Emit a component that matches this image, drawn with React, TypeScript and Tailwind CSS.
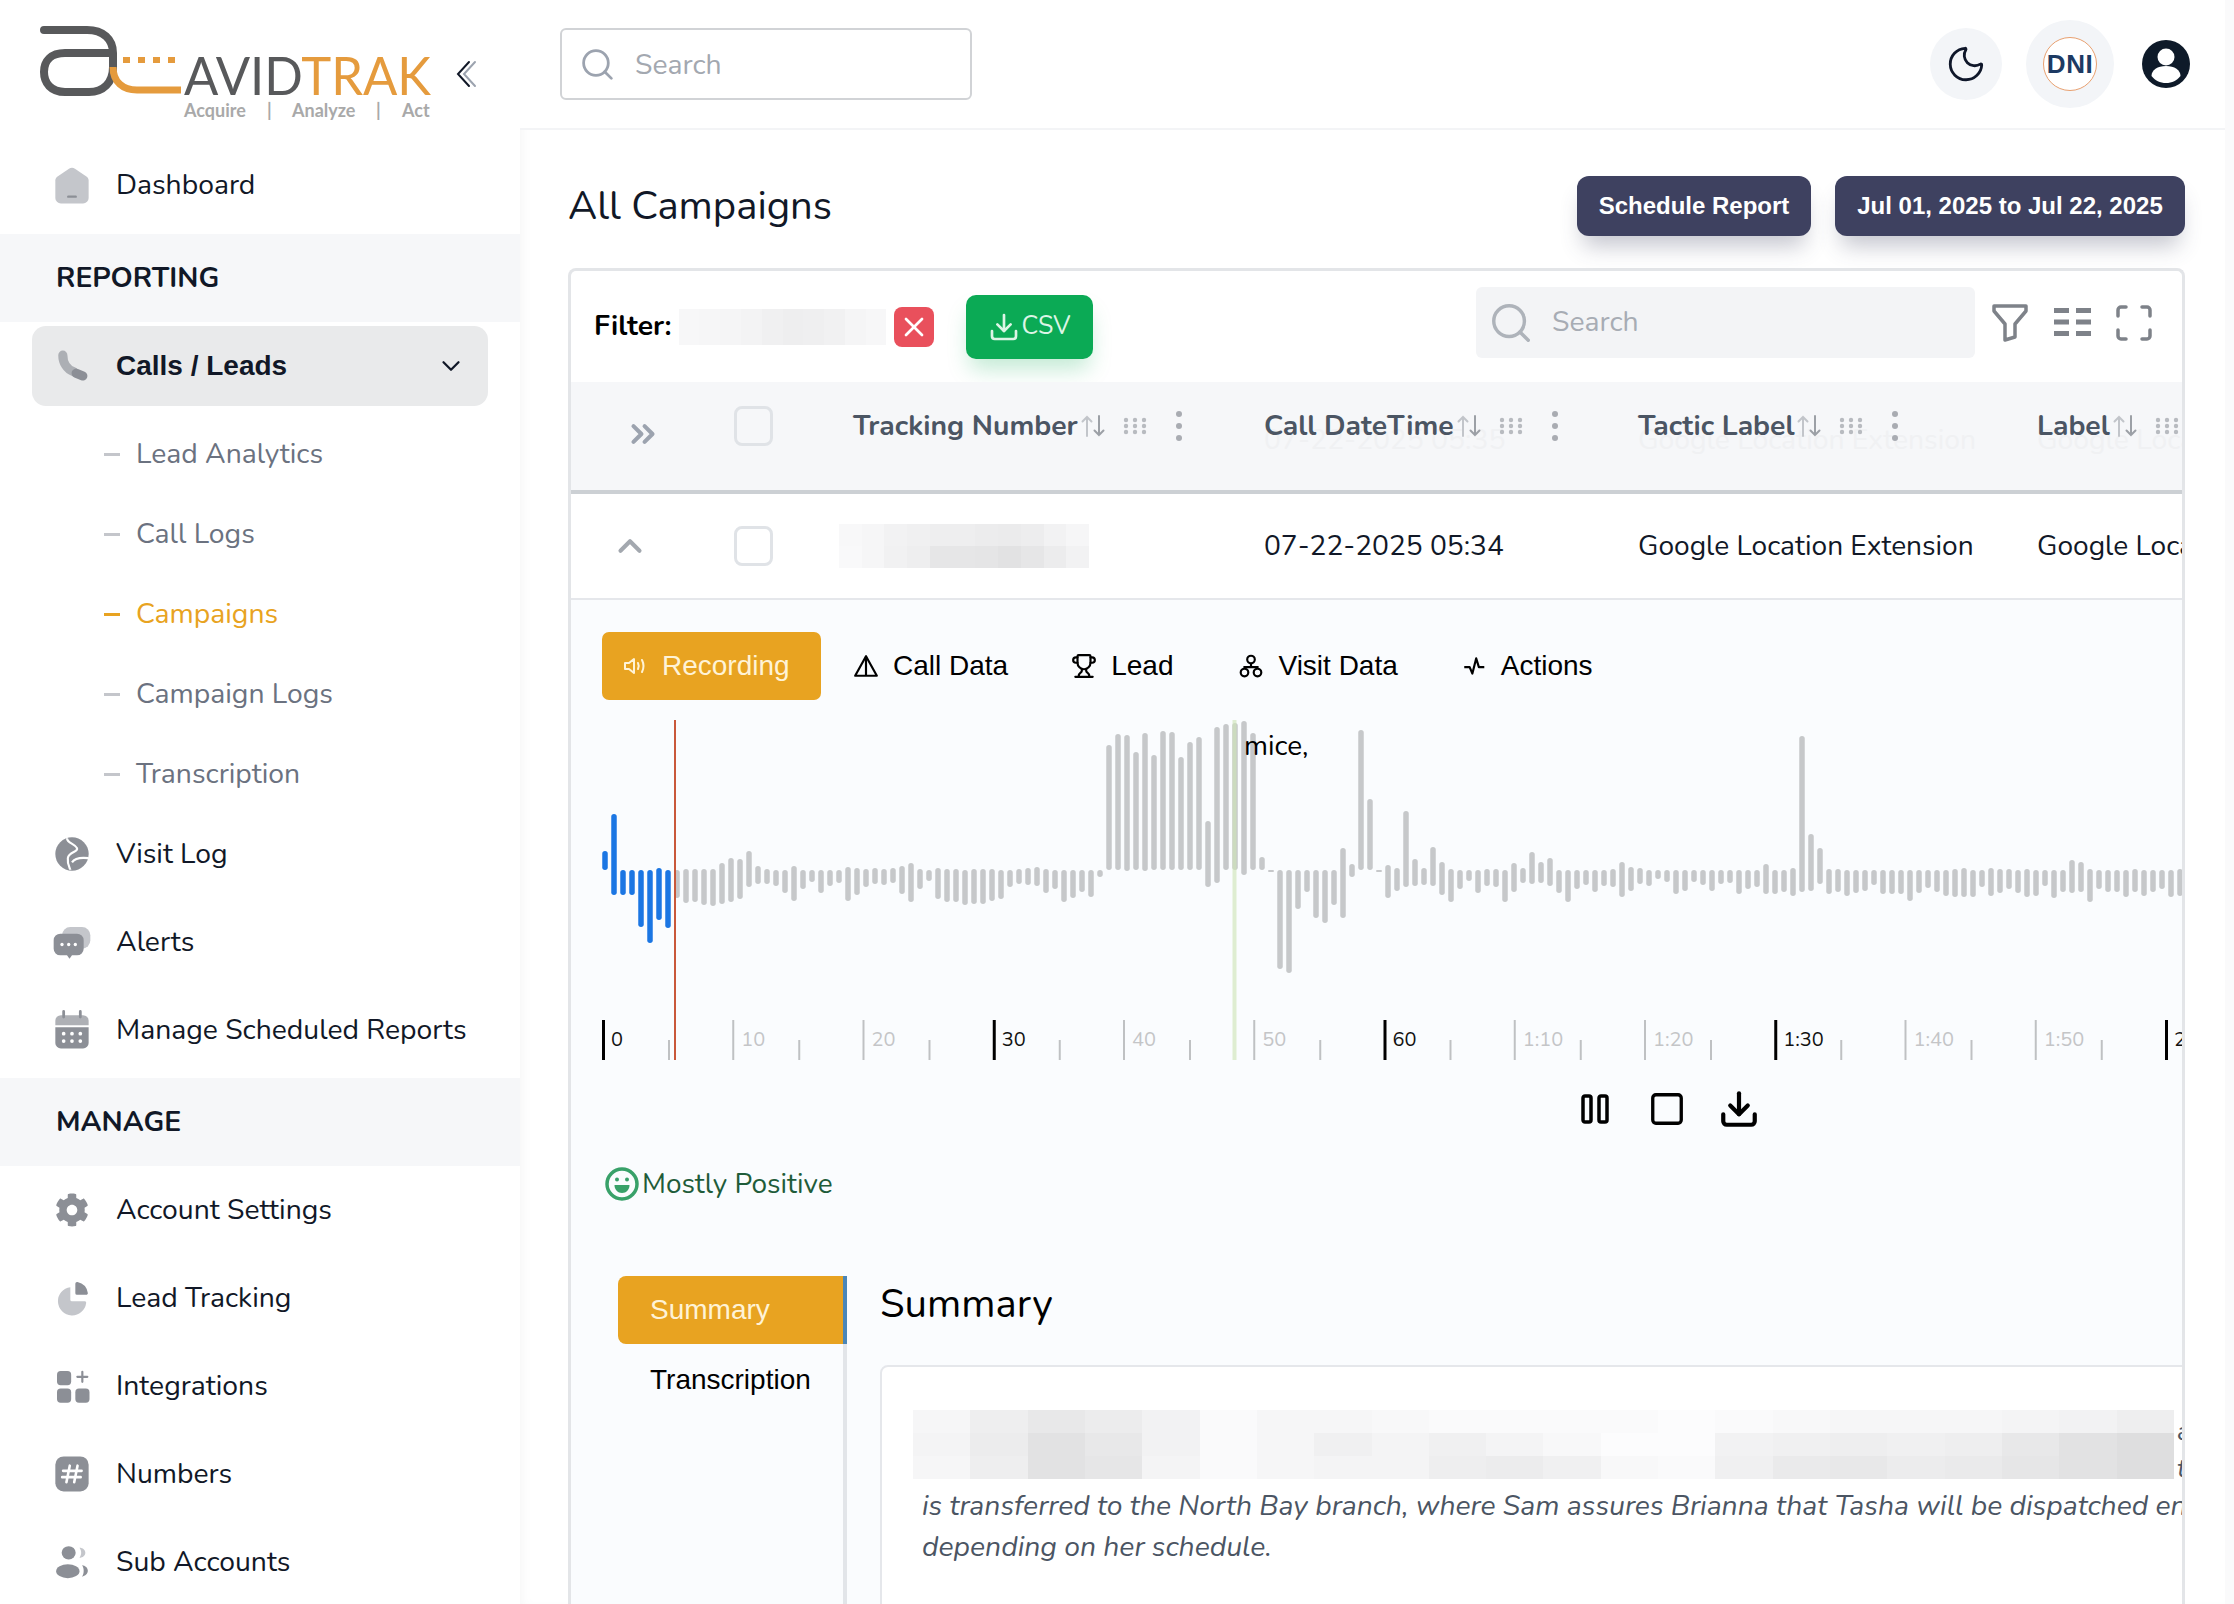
// App.tsx - AvidTrak campaign call detail

import type { ReactNode } from "react";
import { ChevronDown, ChevronUp, ChevronsRight, Download, Moon, Search, Square, Trophy, X } from "lucide-react";
import { FaCog } from "react-icons/fa";

const DARK = "#8c8f96";
const LIGHT = "#c4c6cb";

/* ---------- sidebar icons ---------- */

function IconShell({ children }: { children: ReactNode }) {
  return (
    <svg viewBox="0 0 24 24" className="w-[40px] h-[40px] shrink-0">
      {children}
    </svg>
  );
}

const HomeIcon = () => (
  <IconShell>
    <g transform="translate(-1.33 -1.33) scale(1.11)">
      <path d="M3 9.6c0-.8.4-1.5 1-2l6.4-4.4c1-.6 2.200-.6 3.200 0L20 7.600c.6.500 1 1.200 1 2V19a3 3 0 0 1-3 3H6a3 3 0 0 1-3-3Z" fill={LIGHT} />
      <path d="M10 18.300h4" stroke={DARK} strokeWidth="1.300" strokeLinecap="round" />
    </g>
  </IconShell>
);

const PhoneIcon = () => (
  <IconShell>
    <path d="M6.500 5.500C6.500 10 9 14 13 15.500" stroke={DARK} strokeWidth="5.500" strokeLinecap="round" fill="none" opacity=".65" />
    <path d="M14.500 16.300 18.500 18" stroke={DARK} strokeWidth="5.500" strokeLinecap="round" fill="none" />
  </IconShell>
);

const GlobeIcon = () => (
  <IconShell>
    <circle cx="12" cy="12" r="10" fill={DARK} />
    <path d="M9 2.500c0 3 5 3.500 6 6s-5 2-5.500 6 1.500 6.500 1.500 7" stroke="#fff" strokeWidth="1.300" fill="none" />
    <path d="M12 17c2-3 6-3 10-2.500" stroke="#fff" strokeWidth="1.300" fill="none" />
  </IconShell>
);

const AlertsIcon = () => (
  <IconShell>
    <rect x="6" y="3" width="17" height="13" rx="5" fill={LIGHT} />
    <path d="M1 11a4 4 0 0 1 4-4h10a4 4 0 0 1 4 4v5a4 4 0 0 1-4 4h-3l-1.500 2-1.500-2H5a4 4 0 0 1-4-4Z" fill={DARK} />
    <circle cx="6" cy="13.500" r="1" fill="#fff" />
    <circle cx="10" cy="13.500" r="1" fill="#fff" />
    <circle cx="14" cy="13.500" r="1" fill="#fff" />
  </IconShell>
);

const CalendarIcon = () => (
  <IconShell>
    <g transform="translate(-1.33 -1.33) scale(1.11)">
      <path d="M7.500 2v3M16.500 2v3" stroke={DARK} strokeWidth="1.500" strokeLinecap="round" />
      <path d="M3 7a3 3 0 0 1 3-3h12a3 3 0 0 1 3 3v2.500H3Z" fill={DARK} opacity=".7" />
      <path d="M3 10.500h18V19a3 3 0 0 1-3 3H6a3 3 0 0 1-3-3Z" fill={DARK} />
      {[7.5, 12, 16.5].map((x) =>
        [14, 18].map((y) => <circle key={`${x}-${y}`} cx={x} cy={y} r="1" fill="#fff" />)
      )}
    </g>
  </IconShell>
);

const PieIcon = () => (
  <IconShell>
    <path d="M11 5.500a8.500 8.500 0 1 0 9.500 9.500c.1-.6-.4-1-1-1H12a1 1 0 0 1-1-1Z" fill={LIGHT} />
    <path d="M14 3.500c0-.8.6-1.300 1.300-1.100A8 8 0 0 1 21.500 9c.1.600-.4 1.100-1 1.100H15a1 1 0 0 1-1-1Z" fill={DARK} />
  </IconShell>
);

const WidgetsIcon = () => (
  <IconShell>
    <rect x="3" y="3" width="8.500" height="8.500" rx="2.200" fill={DARK} />
    <rect x="3" y="13.500" width="8.500" height="8.500" rx="2.200" fill={DARK} />
    <rect x="14" y="13.500" width="8.500" height="8.500" rx="2.200" fill={DARK} />
    <path d="M18.200 3.500v6M15.200 6.500h6" stroke={DARK} strokeWidth="1.300" strokeLinecap="round" />
  </IconShell>
);

const HashIcon = () => (
  <IconShell>
    <g transform="translate(-1.33 -1.33) scale(1.11)">
      <rect x="3" y="2.500" width="18" height="19" rx="4.500" fill={DARK} />
      <path d="M10.800 7.500 9 16.500M15 7.500l-1.800 9M7.200 10.300h10M6.700 13.700h10" stroke="#fff" strokeWidth="1.400" strokeLinecap="round" />
    </g>
  </IconShell>
);

const UsersIcon = () => (
  <IconShell>
    <ellipse cx="10" cy="6.500" rx="4.200" ry="4" fill={DARK} />
    <ellipse cx="9.500" cy="17.500" rx="7" ry="4.200" fill={DARK} />
    <path d="M16.500 3.500c2 0 3.500 1.300 3.500 3s-1.500 3-3.500 3c.7-.9 1-1.900 1-3s-.3-2.100-1-3Z" fill={LIGHT} />
    <path d="M18 14c2 .2 3.500 1.600 3.500 3.300S20 20.500 18 20.800c.8-1 1-2.300 1-3.500 0-1.200-.2-2.300-1-3.300Z" fill={DARK} />
  </IconShell>
);

const GearIcon = () => <FaCog className="w-[34px] h-[34px] mx-[3px] shrink-0 text-[#8c8f96]" />;

/* ---------- logo ---------- */

function Logo() {
  const tag = { fontSize: 18, fontFamily: "Lato, sans-serif", fontWeight: 700, fill: "#a9a9a9" };
  return (
    <svg viewBox="0 0 410 110" className="w-[410px] h-[110px] shrink-0">
      <path d="M13 13h43c16 0 26 9 26 23v14c0 16-10 25-24 25H34C20 75 13 66 13 55s7-19 21-19h48" fill="none" stroke="#58595b" strokeWidth="8" strokeLinecap="round" />
      <path d="M82 50c0 15 10 23 24 23h44" fill="none" stroke="#e59b3d" strokeWidth="7" />
      <path d="M92 43h52" fill="none" stroke="#e59b3d" strokeWidth="6" strokeDasharray="7 8" />
      <text x="153" y="78" fontSize="53" fontFamily="Lato, sans-serif" fontWeight="400" textLength="247" lengthAdjust="spacingAndGlyphs">
        <tspan fill="#58595b">AVID</tspan>
        <tspan fill="#e59b3d">TRAK</tspan>
      </text>
      <text x="153" y="100" {...tag}>Acquire</text>
      <text x="236" y="100" {...tag}>|</text>
      <text x="261" y="100" {...tag}>Analyze</text>
      <text x="345" y="100" {...tag}>|</text>
      <text x="371" y="100" {...tag}>Act</text>
    </svg>
  );
}

/* ---------- sidebar ---------- */

function NavRow({ icon, label, className = "h-[88px]" }: { icon: ReactNode; label: string; className?: string }) {
  return (
    <div className={`flex items-center pl-[52px] gap-[24px] text-[#111827] ${className}`}>
      {icon}
      <span>{label}</span>
    </div>
  );
}

function SectionBand({ title }: { title: string }) {
  return (
    <div className="h-[88px] bg-[#f6f7f9] flex items-center pl-[56px] font-bold text-[#111827]">
      {title}
    </div>
  );
}

const subItems = ["Lead Analytics", "Call Logs", "Campaigns", "Campaign Logs", "Transcription"];

function Sidebar() {
  return (
    <aside className="w-[520px] h-full shrink-0 bg-white overflow-hidden text-[28.3px] font-['Nunito','Lato',sans-serif]">
      <div className="h-[141px] flex items-start pl-[31px] pt-[17px]">
        <Logo />
        <svg viewBox="0 0 22 28" className="ml-[15px] mt-[43px] w-[22px] h-[28px]" fill="none" strokeWidth="2" strokeLinecap="round">
          <path d="M19 2 8 14l11 12" stroke="#9ca3af" />
          <path d="M13 2 2 14l11 12" stroke="#111827" />
        </svg>
      </div>
      <NavRow icon={<HomeIcon />} label="Dashboard" className="h-[88px] mb-[5px]" />
      <SectionBand title="REPORTING" />
      <div className="mx-[32px] mt-[4px] h-[80px] rounded-[14px] bg-[#e9eaeb] flex items-center pl-[20px] pr-[22px] gap-[24px] font-['Liberation_Sans',sans-serif] font-bold text-[#111827] text-[28px]">
        <PhoneIcon />
        <span className="flex-1">Calls / Leads</span>
        <ChevronDown className="w-[30px] h-[30px]" strokeWidth={1.8} />
      </div>
      <div className="pt-[8px]">
        {subItems.map((item) => (
          <div
            key={item}
            className={`h-[80px] flex items-center pl-[104px] gap-[16px] ${item === "Campaigns" ? "text-[#e8a321]" : "text-[#6b7280]"}`}
          >
            <span className={`w-[16px] h-[3px] ${item === "Campaigns" ? "bg-[#e8a321]" : "bg-[#c4c6cb]"}`} />
            <span>{item}</span>
          </div>
        ))}
      </div>
      <NavRow icon={<GlobeIcon />} label="Visit Log" className="h-[80px] mb-[4px]" />
      <NavRow icon={<AlertsIcon />} label="Alerts" />
      <NavRow icon={<CalendarIcon />} label="Manage Scheduled Reports" className="h-[88px] mb-[4px]" />
      <SectionBand title="MANAGE" />
      <NavRow icon={<GearIcon />} label="Account Settings" />
      <NavRow icon={<PieIcon />} label="Lead Tracking" />
      <NavRow icon={<WidgetsIcon />} label="Integrations" />
      <NavRow icon={<HashIcon />} label="Numbers" />
      <NavRow icon={<UsersIcon />} label="Sub Accounts" />
    </aside>
  );
}

/* ---------- pixelated redaction blocks ---------- */

function Pixelated({ rows, className }: { rows: number[][]; className: string }) {
  return (
    <div className={`flex flex-col overflow-hidden ${className}`}>
      {rows.map((row, r) => (
        <div key={r} className="flex flex-1">
          {row.map((g, c) => (
            <div key={c} className="flex-1" style={{ backgroundColor: `rgb(${g},${g},${g + 1})` }} />
          ))}
        </div>
      ))}
    </div>
  );
}

const filterBlur = [[247, 246, 245, 243, 240, 238, 239, 241, 245, 247]];
const rowBlur = [
  [248, 246, 242, 240, 238, 238, 236, 235, 237, 242, 246],
  [249, 246, 241, 238, 230, 230, 229, 226, 230, 236, 242],
];
const summaryBlur = [
  [246, 238, 232, 236, 242, 250, 246, 246, 248, 250, 250, 250, 250, 252, 250, 248, 246, 246, 246, 244, 242, 238],
  [244, 236, 226, 232, 242, 250, 246, 240, 244, 240, 244, 248, 252, 252, 242, 240, 238, 240, 238, 232, 226, 222],
  [246, 238, 226, 230, 244, 250, 246, 244, 244, 238, 236, 240, 248, 250, 240, 234, 232, 236, 234, 230, 226, 222],
];

/* ---------- waveform ---------- */

// [above baseline, below baseline] for each bar, 9px apart
const bars: [number, number][] = [
  [19, 0], [56, 25], [0, 25], [0, 25], [0, 57], [0, 73], [2, 50], [0, 58],
  [0, 28], [1, 33], [1, 32], [1, 35], [1, 36], [7, 34], [12, 32], [11, 29],
  [19, 17], [4, 14], [1, 14], [0, 16], [0, 23], [4, 31], [0, 19], [0, 12],
  [0, 23], [0, 16], [0, 13], [3, 31], [2, 25], [1, 17], [2, 14], [1, 15],
  [2, 13], [4, 24], [7, 32], [1, 19], [0, 11], [2, 29], [1, 32], [1, 32],
  [0, 35], [1, 34], [1, 34], [1, 31], [0, 29], [0, 17], [1, 14], [2, 15],
  [3, 16], [1, 23], [0, 19], [0, 32], [0, 28], [0, 22], [0, 27], [0, 7],
  [125, 0], [136, 0], [135, 1], [118, 0], [137, 1], [115, 0], [139, 0], [138, 0],
  [113, 0], [128, 0], [133, 0], [49, 17], [143, 13], [146, 0], [147, 0], [149, 5],
  [137, 0], [13, 0], [0, 0], [0, 99], [0, 103], [0, 39], [0, 22], [0, 48],
  [0, 53], [0, 35], [22, 48], [6, 7], [140, 0], [71, 0], [0, 0], [5, 28],
  [2, 21], [59, 17], [11, 16], [2, 15], [23, 16], [8, 25], [1, 32], [0, 19],
  [0, 11], [0, 23], [1, 16], [1, 17], [0, 32], [7, 22], [2, 13], [18, 14],
  [8, 13], [12, 16], [0, 23], [0, 32], [0, 19], [0, 15], [0, 22], [0, 16],
  [1, 17], [8, 27], [3, 21], [2, 14], [0, 16], [0, 9], [0, 12], [0, 24],
  [0, 21], [0, 12], [0, 15], [0, 21], [0, 14], [0, 13], [0, 24], [0, 19],
  [0, 17], [6, 24], [0, 24], [0, 22], [2, 26], [134, 22], [36, 21], [22, 14],
  [1, 24], [1, 22], [0, 26], [0, 23], [0, 21], [0, 15], [0, 24], [0, 24],
  [0, 24], [0, 31], [0, 23], [0, 18], [0, 22], [0, 26], [1, 27], [2, 27],
  [0, 27], [0, 17], [2, 26], [1, 23], [1, 19], [0, 23], [1, 27], [0, 26],
  [0, 16], [0, 28], [0, 22], [10, 23], [8, 22], [1, 32], [0, 19], [0, 22],
  [0, 22], [0, 27], [1, 22], [0, 26], [0, 22], [0, 19], [0, 27], [1, 26],
];

const tickLabels = ["0", "10", "20", "30", "40", "50", "60", "1:10", "1:20", "1:30", "1:40", "1:50", "2:00"];

function Waveform() {
  const base = 150;
  const pitch = 130.25;
  return (
    <svg width={1612} height={342} viewBox="0 0 1612 342" className="block font-['Nunito','Lato',sans-serif] shrink-0 ml-[31px]">
      {bars.map(([up, down], i) => {
        const h = Math.max(up + down, 2);
        return (
          <rect
            key={i}
            x={3 + 9 * i - 2.75}
            y={base - up}
            width={5.5}
            height={h}
            rx={h > 5 ? 2.75 : 0.5}
            fill={i < 8 ? "#1b76e3" : "#c6c8ca"}
          />
        );
      })}
      <rect x={630.5} y={0} width={4} height={340} fill="#cfe5b8" opacity={0.65} />
      <rect x={72} y={0} width={2} height={340} fill="#c9583a" />
      <text x={642} y={35} fontSize={28} fill="#000">mice,</text>
      {tickLabels.map((label, i) => {
        const x = 1 + pitch * i;
        const major = i % 3 === 0;
        return (
          <g key={label}>
            <rect x={x - 1} y={300} width={major ? 3 : 2} height={40} fill={major ? "#000" : "#bfc1c3"} />
            <rect x={x + 65} y={320} width={2} height={20} fill="#bfc1c3" />
            <text x={x + 8} y={326} fontSize={20} fill={major ? "#111" : "#c4c5c7"}>{label}</text>
          </g>
        );
      })}
    </svg>
  );
}

/* ---------- small drawn icons ---------- */

function SortArrows() {
  return (
    <svg viewBox="0 0 26 26" className="w-[26px] h-[26px] shrink-0" fill="none" strokeWidth="2" strokeLinecap="round">
      <path d="M7 23V4M2.500 8.500 7 4l4.500 4.500" stroke="#c2c5ca" />
      <path d="M19 3v19M14.500 17.500 19 22l4.500-4.500" stroke="#9ca0a6" />
    </svg>
  );
}

function Grip() {
  return (
    <svg viewBox="0 0 24 18" className="w-[24px] h-[18px] shrink-0" fill="#b8bbc0">
      {[3, 12, 21].map((x) => [3, 9, 15].map((y) => <circle key={`${x}${y}`} cx={x} cy={y} r="2.200" />))}
    </svg>
  );
}

function Kebab() {
  return (
    <svg viewBox="0 0 8 32" className="w-[8px] h-[32px] shrink-0" fill="#a9acb2">
      <circle cx="4" cy="4" r="3" />
      <circle cx="4" cy="16" r="3" />
      <circle cx="4" cy="28" r="3" />
    </svg>
  );
}

function HeadCell({ label, className }: { label: string; className: string }) {
  return (
    <div className={`relative flex items-center shrink-0 h-[88px] ${className}`}>
      <span className="font-bold text-[#4b5563] whitespace-nowrap">{label}</span>
      <span className="ml-[2px]"><SortArrows /></span>
      <span className="ml-[17px]"><Grip /></span>
      <span className="ml-[28px]"><Kebab /></span>
    </div>
  );
}

/* ---------- main ---------- */

function Topbar() {
  return (
    <header className="h-[130px] bg-white border-b-2 border-[#f3f4f6] flex items-center pl-[40px] pr-[35px] shrink-0">
      <div className="w-[412px] h-[72px] border-2 border-[#d1d3d6] rounded-[6px] flex items-center pl-[17px] gap-[19px]">
        <Search className="w-[37px] h-[37px] text-[#9ca3af]" strokeWidth={1.8} />
        <span className="text-[28.3px] text-[#a3a8b0] pt-[2px]">Search</span>
      </div>
      <div className="ml-auto flex items-center">
        <div className="w-[72px] h-[72px] rounded-full bg-[#f3f5f8] flex items-center justify-center">
          <Moon className="w-[42px] h-[42px] text-[#0f172a]" strokeWidth={1.6} />
        </div>
        <div className="ml-[24px] w-[88px] h-[88px] rounded-full bg-[#f3f5f8] flex items-center justify-center">
          <div className="w-[54px] h-[54px] rounded-full border border-[#e8a070] bg-white flex items-center justify-center text-[#1d3a63] font-['Liberation_Sans',sans-serif] font-bold text-[26px] tracking-[0.5px]">
            DNI
          </div>
        </div>
        <svg viewBox="0 0 48 48" className="ml-[28px] w-[48px] h-[48px]">
          <circle cx="24" cy="24" r="24" fill="#0e1a29" />
          <circle cx="24" cy="17" r="8.500" fill="#fff" />
          <path d="M9.500 36c0-6 6-10 14.500-10s14.500 4 14.500 10c-3.500 4.500-8.500 7-14.500 7s-11-2.500-14.500-7Z" fill="#fff" />
        </svg>
      </div>
    </header>
  );
}

function Tab({ icon, label, className }: { icon: ReactNode; label: string; className: string }) {
  return (
    <div className={`flex items-center gap-[14px] text-black ${className}`}>
      {icon}
      <span>{label}</span>
    </div>
  );
}

function DetailPanel() {
  return (
    <div className="bg-[#fafcfe] pt-[32px] overflow-hidden">
      <div className="flex items-center h-[68px] pl-[31px] font-['Liberation_Sans',sans-serif] text-[28px]">
        <div className="w-[219px] h-full rounded-[7px] bg-[#e8a321] text-[#fff3d6] flex items-center pl-[21px] gap-[15px]">
          <svg viewBox="0 0 24 24" className="w-[24px] h-[24px]" fill="none" stroke="currentColor" strokeWidth="2" strokeLinejoin="round" strokeLinecap="round">
            <path d="M11 5v14l-5-4H2V9h4Z" />
            <path d="M15 9c1 2 1 4 0 6M19 6c2 4 2 8 0 12" />
          </svg>
          <span>Recording</span>
        </div>
        <Tab
          className="ml-[32px]"
          label="Call Data"
          icon={
            <svg viewBox="0 0 24 24" className="w-[26px] h-[26px]" fill="none" stroke="#000" strokeWidth="2" strokeLinejoin="round">
              <path d="M12 3 2 21h20Z" />
              <path d="M12 3v18" />
            </svg>
          }
        />
        <Tab className="ml-[63px]" label="Lead" icon={<Trophy className="w-[26px] h-[26px]" strokeWidth={2} />} />
        <Tab
          className="ml-[65px]"
          label="Visit Data"
          icon={
            <svg viewBox="0 0 24 24" className="w-[26px] h-[26px]" fill="none" stroke="#000" strokeWidth="2">
              <circle cx="12" cy="6" r="3.500" />
              <circle cx="6" cy="18" r="3.500" />
              <circle cx="18" cy="18" r="3.500" />
              <path d="M12 9.500V13M6 14.500V13h12v1.500" />
            </svg>
          }
        />
        <Tab
          className="ml-[63px]"
          label="Actions"
          icon={
            <svg viewBox="0 0 24 24" className="w-[26px] h-[26px]" fill="none" stroke="#000" strokeWidth="2" strokeLinejoin="round">
              <path d="M3 13h5l2.500 6 3.500-14 2.500 8h5" />
            </svg>
          }
        />
      </div>

      <div className="mt-[20px]">
        <Waveform />
      </div>

      <div className="flex items-center pl-[1010px] mt-[28px] h-[37px]">
        <svg viewBox="0 0 28 30" className="w-[28px] h-[30px]" fill="none" stroke="#000" strokeWidth="3.500">
          <rect x="2" y="2" width="8" height="26" rx="2" />
          <rect x="18" y="2" width="8" height="26" rx="2" />
        </svg>
        <Square className="ml-[39px] w-[38px] h-[38px]" strokeWidth={2.1} />
        <Download className="ml-[32px] w-[42px] h-[42px]" strokeWidth={2.4} />
      </div>

      <div className="flex items-center mt-[40px] pl-[34px] h-[34px] gap-[3px] text-[28px] text-[#1f5c3a]">
        <svg viewBox="0 0 34 34" className="w-[34px] h-[34px]" fill="none">
          <circle cx="17" cy="17" r="15" stroke="#38a169" strokeWidth="3.500" />
          <circle cx="12" cy="12.500" r="2" fill="#38a169" />
          <circle cx="22" cy="12.500" r="2" fill="#38a169" />
          <path d="M9.500 18h15c0 4.500-3.200 8-7.500 8s-7.500-3.500-7.500-8Z" fill="#38a169" />
        </svg>
        <span>Mostly Positive</span>
      </div>

      <div className="flex mt-[75px] pl-[47px] h-[400px]">
        <div className="w-[229px] shrink-0 border-r-[4px] border-[#e2e5e9] font-['Liberation_Sans',sans-serif] text-[28px]">
          <div className="relative -mr-[4px] h-[68px] rounded-l-[8px] bg-[#e8a321] border-r-[4px] border-[#4a86b8] text-[#fff3d6] flex items-center pl-[32px]">
            Summary
          </div>
          <div className="pl-[32px] pt-[15px] text-black">Transcription</div>
        </div>
        <div className="pl-[33px] w-[1400px] shrink-0 relative">
          <div className="text-[40px] leading-[56px] text-black">Summary</div>
          <div className="mt-[33px] w-[1400px] h-[400px] bg-white border-2 border-[#e5e7eb] rounded-[8px] pl-[31px] pt-[43px] relative">
            <Pixelated rows={summaryBlur} className="w-[1261px] h-[69px]" />
            <div className="pl-[9px] mt-[6px] italic text-[28.3px] leading-[41px] text-[#4b5563] whitespace-nowrap">
              <div>is transferred to the North Bay branch, where Sam assures Brianna that Tasha will be dispatched en route</div>
              <div>depending on her schedule.</div>
            </div>
            <span className="absolute left-[1295px] top-[45px] italic text-[26px] text-[#4b5563]">a</span>
            <span className="absolute left-[1295px] top-[82px] italic text-[26px] text-[#4b5563]">tl</span>
          </div>
        </div>
      </div>
    </div>
  );
}

function CampaignCard() {
  return (
    <div className="mt-[32px] border-[3px] border-b-0 border-[#e3e5e8] rounded-t-[8px] overflow-hidden h-[1336px] bg-white text-[28.3px]">
      <div className="h-[111px] flex items-center relative">
        <span className="ml-[23px] font-bold text-black">Filter:</span>
        <Pixelated rows={filterBlur} className="ml-[7px] w-[208px] h-[36px]" />
        <div className="ml-[7px] w-[40px] h-[40px] rounded-[8px] bg-[#e9505c] flex items-center justify-center">
          <X className="w-[32px] h-[32px] text-white" strokeWidth={2} />
        </div>
        <div className="ml-[32px] w-[127px] h-[64px] rounded-[10px] bg-[#0baa55] text-[#dcf5e6] flex items-center justify-center gap-[2px] shadow-[0_14px_22px_-4px_rgba(11,170,85,0.25)] text-[25px]">
          <Download className="w-[32px] h-[32px]" strokeWidth={2} />
          <span>CSV</span>
        </div>
        <div className="absolute left-[905px] top-[16px] w-[499px] h-[71px] bg-[#f3f4f6] rounded-[6px] flex items-center pl-[12px] gap-[18px]">
          <Search className="w-[46px] h-[46px] text-[#aeb3ba]" strokeWidth={1.8} />
          <span className="text-[#a7acb4]">Search</span>
        </div>
        <svg viewBox="0 0 36 38" className="absolute left-[1421px] top-[33px] w-[36px] h-[38px]" fill="none" stroke="#7e8289" strokeWidth="3.500" strokeLinejoin="round">
          <path d="M2 2h32v5L23 20v13l-10 3V20L2 7Z" />
        </svg>
        <svg viewBox="0 0 37 28" className="absolute left-[1483px] top-[37px] w-[37px] h-[28px]" fill="#7e8289">
          {[0, 11.5, 23].map((y) => (
            <g key={y}>
              <rect x="0" y={y} width="15" height="5" />
              <rect x="22" y={y} width="15" height="5" />
            </g>
          ))}
        </svg>
        <svg viewBox="0 0 36 36" className="absolute left-[1545px] top-[34px] w-[36px] h-[36px]" fill="none" stroke="#7e8289" strokeWidth="3.500" strokeLinecap="round">
          <path d="M2 11V5a3 3 0 0 1 3-3h5M26 2h5a3 3 0 0 1 3 3v6M34 25v6a3 3 0 0 1-3 3h-5M10 34H5a3 3 0 0 1-3-3v-6" />
        </svg>
      </div>

      {/* table head, with the scrolled row showing faintly behind it */}
      <div className="relative h-[112px] bg-[#f6f7f9] border-b-[4px] border-[#ccd0d4] flex items-start overflow-hidden">
        <span className="absolute left-[693px] top-[37px] text-[#f0f1f3] whitespace-nowrap">07-22-2025 05:35</span>
        <span className="absolute left-[1067px] top-[37px] text-[#f0f1f3] whitespace-nowrap">Google Location Extension</span>
        <span className="absolute left-[1466px] top-[37px] text-[#f0f1f3] whitespace-nowrap">Google Location</span>
        <div className="w-[117px] shrink-0 h-[104px] flex items-center pl-[53px]">
          <ChevronsRight className="w-[38px] h-[38px] text-[#9ca3af]" strokeWidth={2.6} />
        </div>
        <div className="w-[165px] shrink-0 h-[88px] flex items-center pl-[46px]">
          <span className="w-[39px] h-[40px] border-[3px] border-[#e0e3e7] rounded-[8px]" />
        </div>
        <HeadCell label="Tracking Number" className="w-[411px]" />
        <HeadCell label="Call DateTime" className="w-[374px]" />
        <HeadCell label="Tactic Label" className="w-[399px]" />
        <HeadCell label="Label" className="w-[300px]" />
      </div>

      <div className="h-[106px] bg-white border-b-2 border-[#e5e7eb] flex items-center text-[#111827] text-[28.1px]">
        <div className="w-[117px] shrink-0 flex justify-center">
          <ChevronUp className="w-[38px] h-[38px] text-[#a3a8af]" strokeWidth={2.6} />
        </div>
        <div className="w-[165px] shrink-0 pl-[46px]">
          <div className="w-[39px] h-[40px] border-[3px] border-[#e0e3e7] rounded-[8px]" />
        </div>
        <div className="w-[411px] shrink-0">
          <Pixelated rows={rowBlur} className="-ml-[14px] w-[250px] h-[44px]" />
        </div>
        <div className="w-[374px] shrink-0">07-22-2025 05:34</div>
        <div className="w-[399px] shrink-0 whitespace-nowrap">Google Location Extension</div>
        <div className="whitespace-nowrap">Google Location</div>
      </div>

      <DetailPanel />
    </div>
  );
}

function Main() {
  return (
    <main className="flex-1 min-w-0 h-full flex flex-col bg-white overflow-hidden border-r-[9px] border-[#fafafb] shadow-[inset_8px_0_14px_-8px_rgba(0,0,0,0.05)] font-['Nunito','Lato',sans-serif]">
      <Topbar />
      <div className="pl-[48px] pr-[40px] flex-1 min-h-0">
        <div className="flex items-center justify-between h-[60px] mt-[46px]">
          <h1 className="text-[40px] text-[#111827] font-normal">All Campaigns</h1>
          <div className="flex gap-[24px] font-['Liberation_Sans',sans-serif] font-bold text-[24px] text-white">
            <div className="h-[60px] w-[234px] rounded-[12px] bg-[#3e4160] flex items-center justify-center shadow-[0_16px_22px_-6px_rgba(62,65,96,0.3)]">
              Schedule Report
            </div>
            <div className="h-[60px] w-[350px] rounded-[12px] bg-[#3e4160] flex items-center justify-center shadow-[0_16px_22px_-6px_rgba(62,65,96,0.3)]">
              Jul 01, 2025 to Jul 22, 2025
            </div>
          </div>
        </div>
        <CampaignCard />
      </div>
    </main>
  );
}

export default function App() {
  return (
    <div className="w-[2234px] h-[1604px] flex overflow-hidden bg-white">
      <Sidebar />
      <Main />
    </div>
  );
}
